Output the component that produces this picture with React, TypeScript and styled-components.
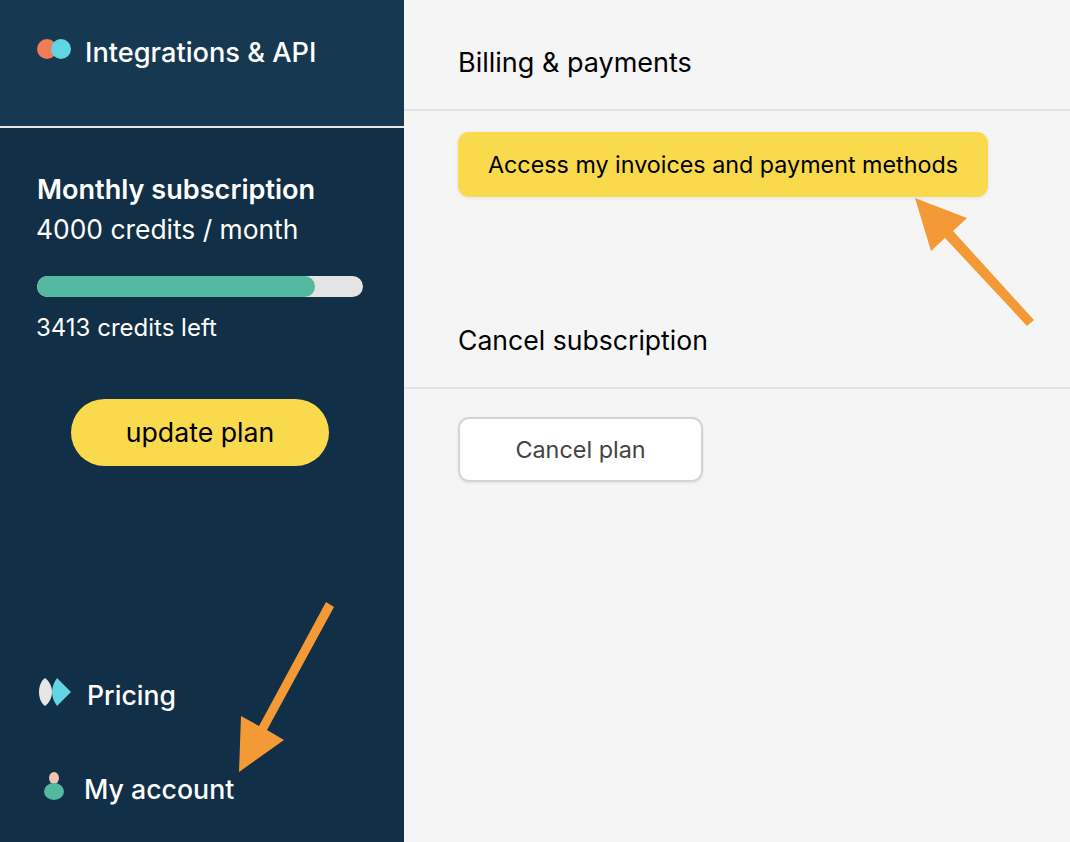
import React from "react";
import styled, {createGlobalStyle} from "styled-components";

const GlobalStyle = createGlobalStyle`
  html, body {
    margin: 0;
    padding: 0;
    height: 100%;
    overflow: hidden;
  }
  body {
    font-family: Inter, "Liberation Sans", sans-serif;
  }
`;

const Page = styled.div`
  position: relative;
  display: flex;
  width: 1070px;
  height: 842px;
  overflow: hidden;
  background: #f5f5f5;
`;

const Sidebar = styled.aside`
  display: flex;
  flex-flow: column nowrap;
  width: 404px;
  height: 100%;
  background: #112f46;
  color: #fff;
`;

const SidebarTop = styled.div`
  display: flex;
  align-items: flex-start;
  gap: 14px;
  box-sizing: border-box;
  height: 128px;
  padding: 37px 0 0 37px;
  background: #163951;
  border-bottom: 2px solid #e6e6e6;
`;

const NavLabel = styled.span<{$left?: number; $size: number}>`
  font-size: ${p => p.$size}px;
  font-weight: 500;
  line-height: 32px;
  margin-left: ${p => p.$left ?? 0}px;
`;

const BottomLabel = styled(NavLabel)`
  margin-bottom: 2px;
`;

const Plan = styled.section`
  display: flex;
  flex-flow: column nowrap;
  padding: 46px 41px 0 37px;
`;

const PlanTitle = styled.div`
  font-size: 27.1px;
  font-weight: 600;
  line-height: 32px;
`;

const PlanCredits = styled.div`
  font-size: 26.4px;
  font-weight: 400;
  line-height: 32px;
  margin: 7px 0 0 -1px;
`;

const Track = styled.div`
  height: 21px;
  margin-top: 31px;
  border-radius: 11px;
  background: #e4e4e4;
  overflow: hidden;
`;

const Fill = styled.div`
  height: 100%;
  border-radius: 11px;
  background: #53b9a0;
`;

const CreditsLeft = styled.div`
  margin: 17px 0 0 -1px;
  font-size: 24px;
  line-height: 28px;
`;

const UpdateButton = styled.button`
  align-self: center;
  width: 258px;
  height: 67px;
  margin-top: 57px;
  padding: 0 0 2px;
  border: 0;
  border-radius: 34px;
  background: #f9da4d;
  color: #000;
  font-family: inherit;
  font-size: 26.7px;
  font-weight: 400;
`;

const BottomNav = styled.nav`
  display: flex;
  flex-flow: column nowrap;
  margin-top: auto;
  padding: 0 0 36px 37px;
  gap: 62px;
`;

const NavItem = styled.div`
  display: flex;
  align-items: center;
  height: 32px;
`;

const Content = styled.main`
  flex: 1;
  padding-top: 45px;
  color: #000;
`;

const SectionTitle = styled.h2<{$size: number; $lineHeight: number; $bottom: number}>`
  margin: 0;
  padding: 0 0 ${p => p.$bottom}px 54px;
  border-bottom: 2px solid #e3e3e3;
  font-size: ${p => p.$size}px;
  font-weight: 400;
  line-height: ${p => p.$lineHeight}px;
`;

const Actions = styled.div<{$top: number; $height: number}>`
  padding: ${p => p.$top}px 0 0 54px;
  height: ${p => p.$height}px;
  box-sizing: border-box;
`;

const InvoiceButton = styled.button`
  display: block;
  width: 530px;
  height: 65px;
  padding: 0;
  border: 0;
  border-radius: 11px;
  background: #f9da4d;
  box-shadow: 0 1px 4px rgba(0, 0, 0, 0.08);
  color: #000;
  font-family: inherit;
  font-size: 23.3px;
  font-weight: 400;
`;

const CancelButton = styled.button`
  display: block;
  width: 245px;
  height: 65px;
  padding: 0;
  border: 2px solid #d4d4d4;
  border-radius: 11px;
  background: #fff;
  box-shadow: 0 1px 3px rgba(0, 0, 0, 0.08);
  color: #444;
  font-family: inherit;
  font-size: 23.4px;
  font-weight: 400;
`;

const Overlay = styled.svg`
  position: absolute;
  top: 0;
  left: 0;
  pointer-events: none;
`;

const CirclesIcon = styled.svg`
  flex: none;
  margin-top: 2px;
`;

const NavIcon = styled.svg<{$left: number}>`
  flex: none;
  margin: 0 0 8px ${p => p.$left}px;
`;

const App: React.FC = () => {
    const creditsPercent = (278 / 326) * 100;

    return (
        <Page>
            <GlobalStyle/>
            <Sidebar>
                <SidebarTop>
                    <CirclesIcon width={34} height={21} viewBox="0 0 34 21">
                        <circle cx="10" cy="10" r="10" fill="#f17c56"/>
                        <circle cx="24" cy="10" r="10" fill="#62d5e3"/>
                    </CirclesIcon>
                    <NavLabel $size={27.2}>Integrations &amp; API</NavLabel>
                </SidebarTop>
                <Plan>
                    <PlanTitle>Monthly subscription</PlanTitle>
                    <PlanCredits>4000 credits / month</PlanCredits>
                    <Track>
                        <Fill style={{width: `${creditsPercent}%`}}/>
                    </Track>
                    <CreditsLeft>3413 credits left</CreditsLeft>
                    <UpdateButton>update plan</UpdateButton>
                </Plan>
                <BottomNav>
                    <NavItem>
                        <NavIcon $left={2} width={32} height={28} viewBox="0 0 32 28">
                            <path d="M6 0 C2 3 0 8 0 14 C0 20 2 25 6 28 C10 25 13 20 13 14 C13 8 10 3 6 0 Z" fill="#e6e6e6"/>
                            <path d="M18 0 L32 14 L18 28 C15 24 13 19 13 14 C13 9 15 4 18 0 Z" fill="#62d5e3"/>
                        </NavIcon>
                        <BottomLabel $size={26.6} $left={16}>Pricing</BottomLabel>
                    </NavItem>
                    <NavItem>
                        <NavIcon $left={7} width={20} height={28} viewBox="0 0 20 28">
                            <ellipse cx="10" cy="6" rx="5" ry="6" fill="#f3c1b0"/>
                            <ellipse cx="10" cy="19.5" rx="10" ry="8.5" fill="#53b9a0"/>
                        </NavIcon>
                        <BottomLabel $size={26.7} $left={20}>My account</BottomLabel>
                    </NavItem>
                </BottomNav>
            </Sidebar>
            <Content>
                <SectionTitle $size={27} $lineHeight={36} $bottom={28}>Billing &amp; payments</SectionTitle>
                <Actions $top={21} $height={212}>
                    <InvoiceButton>Access my invoices and payment methods</InvoiceButton>
                </Actions>
                <SectionTitle $size={26.6} $lineHeight={34} $bottom={30}>Cancel subscription</SectionTitle>
                <Actions $top={28} $height={100}>
                    <CancelButton>Cancel plan</CancelButton>
                </Actions>
            </Content>
            <Overlay width={1070} height={842} viewBox="0 0 1070 842">
                <polygon points="915,198 967,218 953,231 1034,320 1027,326 945,238 931,251" fill="#f39a37"/>
                <polygon points="326,602 334,607 267,730 284,740 239,772 241,716 259,726" fill="#f39a37"/>
            </Overlay>
        </Page>
    );
};

export default App;
